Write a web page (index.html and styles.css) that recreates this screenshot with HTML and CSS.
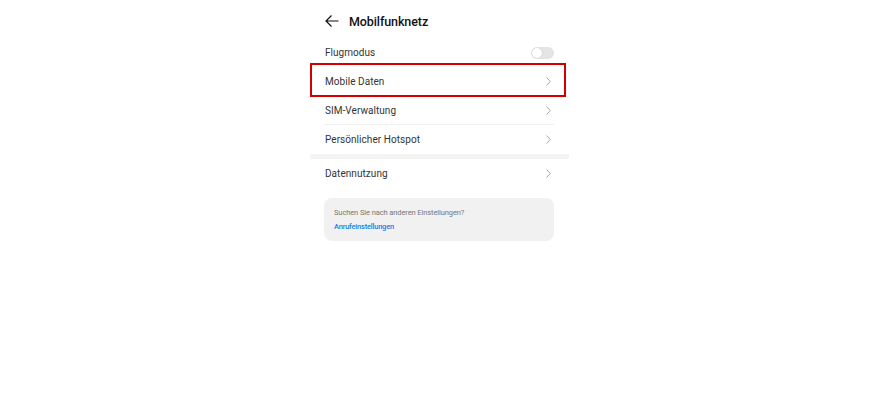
FILE: index.html
```html
<!DOCTYPE html>
<html lang="de">
<head>
<meta charset="utf-8">
<link rel="stylesheet" href="styles.css">
</head>
<body>
<div class="screen">
  <div class="header">
    <svg class="back" width="14" height="12" viewBox="0 0 14 12"><path d="M13.5 6H1M6.5 0.5L1 6l5.5 5.5" fill="none" stroke="#111" stroke-width="1.2"/></svg>
    <span class="title">Mobilfunknetz</span>
  </div>
  <div class="row">
    <span class="label">Flugmodus</span>
    <span class="toggle"><span class="knob"></span></span>
  </div>
  <div class="row highlighted">
    <span class="label">Mobile Daten</span>
    <svg class="chev" width="5" height="9" viewBox="0 0 5 9"><path d="M0.5 0.5L4.3 4.5 0.5 8.5" fill="none" stroke="#a8a8a8" stroke-width="1"/></svg>
    <span class="frame"></span>
  </div>
  <div class="row divided">
    <span class="label">SIM-Verwaltung</span>
    <svg class="chev" width="5" height="9" viewBox="0 0 5 9"><path d="M0.5 0.5L4.3 4.5 0.5 8.5" fill="none" stroke="#a8a8a8" stroke-width="1"/></svg>
  </div>
  <div class="row">
    <span class="label">Persönlicher Hotspot</span>
    <svg class="chev" width="5" height="9" viewBox="0 0 5 9"><path d="M0.5 0.5L4.3 4.5 0.5 8.5" fill="none" stroke="#a8a8a8" stroke-width="1"/></svg>
  </div>
  <div class="band"></div>
  <div class="row">
    <span class="label">Datennutzung</span>
    <svg class="chev" width="5" height="9" viewBox="0 0 5 9"><path d="M0.5 0.5L4.3 4.5 0.5 8.5" fill="none" stroke="#a8a8a8" stroke-width="1"/></svg>
  </div>
  <div class="card">
    <div class="hint">Suchen Sie nach anderen Einstellungen?</div>
    <div class="link">Anrufeinstellungen</div>
  </div>
</div>
</body>
</html>
```
FILE: styles.css
```css
html, body { margin: 0; padding: 0; background: #fff; }
body { font-family: Roboto, "Noto Sans", sans-serif; }
.screen { width: 259px; margin: 0 auto; }
.header { height: 38px; display: flex; align-items: center; padding-left: 15px; padding-top: 4px; box-sizing: border-box; gap: 10px; }
.back { display: block; }
.title { font-size: 12.5px; font-weight: 500; color: #111; letter-spacing: -0.1px; }
.row { position: relative; height: 29px; display: flex; align-items: center; justify-content: space-between; padding: 0 15px 0 15px; box-sizing: border-box; }
.label { font-size: 10px; color: #333; letter-spacing: 0.05px; }
.divided::after { content: ""; position: absolute; left: 14px; right: 15px; bottom: 0; height: 1px; background: #f0f0f0; }
.chev { display: block; margin-right: 3px; }
.toggle { width: 23px; height: 12px; border-radius: 6px; background: #e4e4e4; position: relative; }
.knob { position: absolute; left: 1px; top: 1px; width: 10px; height: 10px; border-radius: 50%; background: #fff; box-shadow: 0 0 1px rgba(0,0,0,0.2); }
.frame { position: absolute; left: 0; right: 3px; top: -4px; bottom: -1px; border: 2px solid #d40000; }
.band { height: 5px; background: #f4f4f4; }
.card { margin: 10px 15px 0 14px; height: 43px; background: #f1f1f1; border-radius: 8px; padding: 10px 10px 0; box-sizing: border-box; }
.hint { font-size: 7.5px; color: #777; line-height: 9px; letter-spacing: -0.1px; }
.link { font-size: 7.5px; color: #1a7fe6; font-weight: 500; line-height: 9px; margin-top: 5px; letter-spacing: -0.2px; }
```
